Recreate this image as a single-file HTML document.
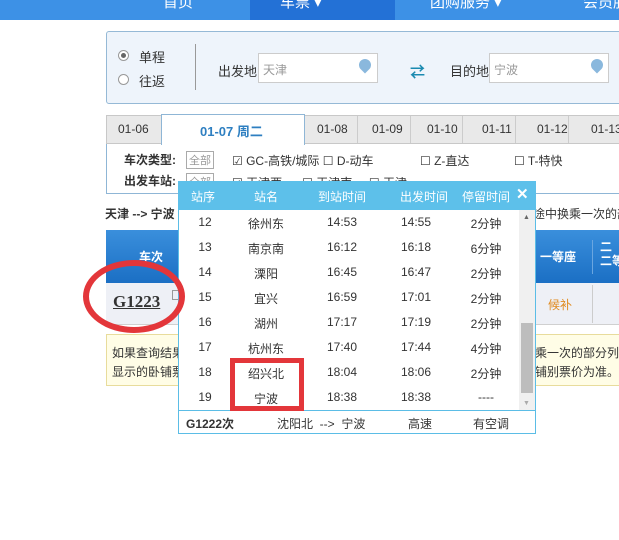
<!DOCTYPE html><html><head><meta charset="utf-8"><style>
*{margin:0;padding:0;box-sizing:border-box}
body{width:619px;height:540px;overflow:hidden;background:#fff;font-family:"Liberation Sans","Noto Sans CJK SC",sans-serif;font-size:13px;color:#333;position:relative}
.a{position:absolute;white-space:nowrap}
</style></head><body>
<div class="a" style="left:0;top:0;width:619px;height:20px;background:#3d91e6"></div>
<div class="a" style="left:250px;top:0;width:145px;height:20px;background:#2371d6"></div>
<div class="a" style="left:163px;top:-9px;color:#fff;font-size:15px">首页</div>
<div class="a" style="left:280px;top:-9px;color:#fff;font-size:15px">车票 ▾</div>
<div class="a" style="left:430px;top:-9px;color:#fff;font-size:15px">团购服务 ▾</div>
<div class="a" style="left:583px;top:-9px;color:#fff;font-size:15px">会员服</div>

<div class="a" style="left:106px;top:31px;width:520px;height:73px;background:#eef4fb;border:1px solid #95b9d6;border-radius:3px"></div>
<div class="a" style="left:118px;top:50px;width:11px;height:11px;border:1px solid #999;border-radius:50%;background:#fff"><div style="margin:2px;width:5px;height:5px;border-radius:50%;background:#666"></div></div>
<div class="a" style="left:139px;top:47px;font-size:13px">单程</div>
<div class="a" style="left:118px;top:74px;width:11px;height:11px;border:1px solid #999;border-radius:50%;background:#fff"></div>
<div class="a" style="left:139px;top:71px">往返</div>
<div class="a" style="left:195px;top:44px;width:1px;height:46px;background:#999"></div>
<div class="a" style="left:218px;top:61px">出发地</div>
<div class="a" style="left:258px;top:53px;width:120px;height:30px;background:#fff;border:1px solid #ccc"></div>
<div class="a" style="left:263px;top:61px;color:#999;font-size:12px">天津</div>
<div class="a" style="left:359px;top:59px;width:12px;height:12px;background:#8ab8dd;border-radius:50% 50% 50% 0;transform:rotate(-45deg)"></div>
<div class="a" style="left:410px;top:61px;color:#1a8ab0;font-size:15px;font-weight:bold">⇄</div>
<div class="a" style="left:450px;top:61px">目的地</div>
<div class="a" style="left:489px;top:53px;width:120px;height:30px;background:#fff;border:1px solid #ccc"></div>
<div class="a" style="left:494px;top:61px;color:#999;font-size:12px">宁波</div>
<div class="a" style="left:591px;top:59px;width:12px;height:12px;background:#8ab8dd;border-radius:50% 50% 50% 0;transform:rotate(-45deg)"></div>

<div class="a" style="left:106px;top:115px;width:520px;height:29px;background:#e9e9e9;border:1px solid #c8c8c8"></div>
<div class="a" style="left:118px;top:122px;font-size:12px">01-06</div>
<div class="a" style="left:161px;top:114px;width:144px;height:31px;background:#fff;border:1px solid #8fb6d6;border-bottom:none"></div>
<div class="a" style="left:200px;top:121px;color:#2e7fc1;font-weight:bold">01-07 周二</div>
<div class="a" style="left:317px;top:122px;font-size:12px">01-08</div>
<div class="a" style="left:357px;top:116px;width:1px;height:27px;background:#ccc"></div>
<div class="a" style="left:372px;top:122px;font-size:12px">01-09</div>
<div class="a" style="left:410px;top:116px;width:1px;height:27px;background:#ccc"></div>
<div class="a" style="left:427px;top:122px;font-size:12px">01-10</div>
<div class="a" style="left:462px;top:116px;width:1px;height:27px;background:#ccc"></div>
<div class="a" style="left:482px;top:122px;font-size:12px">01-11</div>
<div class="a" style="left:515px;top:116px;width:1px;height:27px;background:#ccc"></div>
<div class="a" style="left:537px;top:122px;font-size:12px">01-12</div>
<div class="a" style="left:568px;top:116px;width:1px;height:27px;background:#ccc"></div>
<div class="a" style="left:591px;top:122px;font-size:12px">01-13</div>

<div class="a" style="left:106px;top:144px;width:520px;height:50px;border:1px solid #8fb6d6;border-top:none"></div>
<div class="a" style="left:124px;top:151px;font-weight:bold;font-size:12px">车次类型:</div>
<div class="a" style="left:186px;top:151px;border:1px solid #aaa;color:#999;font-size:11px;padding:0 2px">全部</div>
<div class="a" style="left:232px;top:152px;font-size:12px">☑ GC-高铁/城际 ☐ D-动车</div>
<div class="a" style="left:420px;top:152px;font-size:12px">☐ Z-直达</div>
<div class="a" style="left:514px;top:152px;font-size:12px">☐ T-特快</div>
<div class="a" style="left:124px;top:172px;font-weight:bold;font-size:12px">出发车站:</div>
<div class="a" style="left:186px;top:173px;border:1px solid #aaa;color:#999;font-size:11px;padding:0 2px">全部</div>
<div class="a" style="left:232px;top:174px;font-size:12px">☑ 天津西 &nbsp;&nbsp;&nbsp;&nbsp;&nbsp;☐ 天津南 &nbsp;&nbsp;&nbsp;&nbsp;☐ 天津</div>

<div class="a" style="left:105px;top:205px;font-weight:bold;font-size:12px">天津 --&gt; 宁波</div>
<div class="a" style="left:533px;top:205px;font-size:12px">途中换乘一次的部</div>

<div class="a" style="left:106px;top:230px;width:520px;height:53px;background:linear-gradient(#3a8fdc,#1b6fc4)"></div>
<div class="a" style="left:139px;top:248px;color:#fff;font-weight:bold;font-size:12px">车次</div>
<div class="a" style="left:540px;top:248px;color:#fff;font-weight:bold;font-size:12px">一等座</div>
<div class="a" style="left:592px;top:240px;width:1px;height:34px;background:#6aa6e0"></div>
<div class="a" style="left:600px;top:240px;color:#fff;font-weight:bold;font-size:12px;line-height:14px">二<br>二等</div>
<div class="a" style="left:106px;top:283px;width:520px;height:42px;background:#eef0f6;border-bottom:1px solid #d0d0d0"></div>
<div class="a" style="left:113px;top:292px;font-weight:bold;font-size:17px;font-family:'Liberation Serif',serif;text-decoration:underline">G1223</div>
<div class="a" style="left:172px;top:290px;width:8px;height:10px;border:1px solid #999"></div>
<div class="a" style="left:548px;top:296px;color:#e08a1e;font-size:12px">候补</div>
<div class="a" style="left:592px;top:285px;width:1px;height:38px;background:#ccc"></div>
<div class="a" style="left:106px;top:334px;width:520px;height:52px;background:#fffde6;border:1px solid #e8dc9c"></div>
<div class="a" style="left:112px;top:344px;font-size:12px;line-height:19px">如果查询结果<br>显示的卧铺票</div>
<div class="a" style="left:535px;top:344px;font-size:12px;line-height:19px">乘一次的部分列<br>铺别票价为准。</div>

<div class="a" style="left:178px;top:181px;width:358px;height:253px;background:#fff;border:1px solid #5bbde6"></div>
<div class="a" style="left:178px;top:181px;width:358px;height:29px;background:#5dc0ea"></div>
<div class="a" style="left:191px;top:188px;color:#fff;font-size:12px">站序</div>
<div class="a" style="left:254px;top:188px;color:#fff;font-size:12px">站名</div>
<div class="a" style="left:318px;top:188px;color:#fff;font-size:12px">到站时间</div>
<div class="a" style="left:400px;top:188px;color:#fff;font-size:12px">出发时间</div>
<div class="a" style="left:462px;top:188px;color:#fff;font-size:12px">停留时间</div>
<div class="a" style="left:516px;top:185px;color:#fff;font-size:15px;font-weight:bold">✕</div>
<div class="a" style="left:519px;top:210px;width:16px;height:200px;background:#f0f0f0"></div>
<div class="a" style="left:521px;top:323px;width:12px;height:70px;background:#bdbdbd"></div>
<div class="a" style="left:523px;top:214px;font-size:7px;color:#666">▲</div>
<div class="a" style="left:523px;top:400px;font-size:7px;color:#aaa">▼</div>
<div id="rows"></div>
<div class="a" style="left:178px;top:410px;width:358px;height:1px;background:#5bbde6"></div>
<div class="a" style="left:186px;top:415px;font-size:12px;font-weight:bold">G1222次</div>
<div class="a" style="left:277px;top:415px;font-size:12px">沈阳北 &nbsp;--&gt; &nbsp;宁波</div>
<div class="a" style="left:408px;top:415px;font-size:12px">高速</div>
<div class="a" style="left:473px;top:415px;font-size:12px">有空调</div>
<script>
var d=[["12","徐州东","14:53","14:55","2分钟"],["13","南京南","16:12","16:18","6分钟"],["14","溧阳","16:45","16:47","2分钟"],["15","宜兴","16:59","17:01","2分钟"],["16","湖州","17:17","17:19","2分钟"],["17","杭州东","17:40","17:44","4分钟"],["18","绍兴北","18:04","18:06","2分钟"],["19","宁波","18:38","18:38","----"]];
var h="";d.forEach(function(r,i){var y=215+i*25;var xs=[205,266,342,416,486];r.forEach(function(t,j){h+='<div class="a" style="top:'+y+'px;left:'+xs[j]+'px;transform:translateX(-50%);font-size:12px">'+t+'</div>'})});
document.getElementById("rows").innerHTML=h;
</script>
<div class="a" style="left:230px;top:358px;width:74px;height:53px;border:5px solid #e3363a"></div>
<div class="a" style="left:83px;top:260px;width:102px;height:73px;border:6px solid #e3363a;border-radius:50%"></div>
</body></html>
